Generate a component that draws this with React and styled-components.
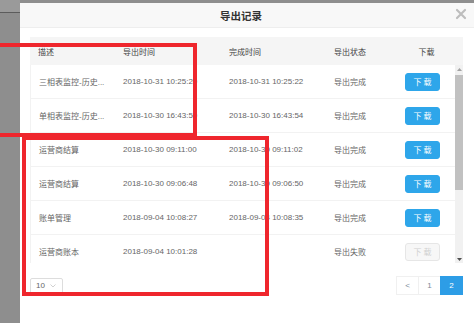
import React from 'react';
import styled, { createGlobalStyle } from 'styled-components';

const GlobalStyle = createGlobalStyle`
  html, body {
    margin: 0;
    padding: 0;
    background: #8e8e8e;
    overflow: hidden;
  }
  body {
    font-family: "Liberation Sans", "Noto Sans CJK SC", sans-serif;
  }
`;

const Page = styled.div`
  position: relative;
  display: flex;
  width: 474px;
  height: 323px;
  overflow: hidden;
  background: #8e8e8e;
`;

const Backdrop = styled.div`
  width: 20px;
  flex-shrink: 0;
`;

const BackdropBar = styled.div`
  height: 12px;
  background: #9a9a9a;
  border-bottom: 1px solid #5c5c5c;
`;

const Modal = styled.div`
  flex: 1;
  margin-top: 3px;
  background: #fff;
  display: flex;
  flex-direction: column;
`;

const ModalHeader = styled.div`
  position: relative;
  height: 24px;
  display: flex;
  align-items: center;
  justify-content: center;
  padding-right: 12px;
  background: #f8f8f8;
  border-bottom: 1px solid #eeeeee;
`;

const Title = styled.h3`
  margin: 0;
  font-size: 10.5px;
  font-weight: bold;
  color: #333;
`;

const Close = styled.span`
  position: absolute;
  right: 7px;
  top: 5px;
  display: flex;
`;

const ModalBody = styled.div`
  padding: 9px 11px 0 10px;
  display: flex;
  flex-direction: column;
`;

const Table = styled.div`
  display: flex;
  flex-direction: column;
`;

const HeadRow = styled.div`
  display: grid;
  grid-template-columns: 85px 106px 105px 64px 73px;
  height: 28px;
  align-items: center;
  background: #f5f5f5;
  font-size: 8px;
  color: #444;
`;

const Cell = styled.div`
  padding-left: ${p => (p.center ? '0' : '8px')};
  text-align: ${p => (p.center ? 'center' : 'left')};
  white-space: nowrap;
  overflow: hidden;
`;

const BodyWrap = styled.div`
  display: flex;
  height: 198px;
`;

const Rows = styled.div`
  width: 425px;
  overflow: hidden;
  border-left: 1px solid #f2f2f2;
  box-sizing: border-box;
`;

const Row = styled.div`
  display: grid;
  grid-template-columns: 84px 106px 105px 64px 65px;
  height: 34px;
  align-items: center;
  border-bottom: 1px solid #f2f2f2;
  box-sizing: border-box;
  font-size: 8px;
  color: #666;
`;

const DownloadButton = styled.button`
  justify-self: center;
  width: 35px;
  height: 18px;
  padding: 0;
  border-radius: 3px;
  font-family: inherit;
  font-size: 8px;
  letter-spacing: 2px;
  text-indent: 2px;
  border: 1px solid ${p => (p.disabled ? '#e6e6e6' : '#2ea6ea')};
  background: ${p => (p.disabled ? '#f7f7f7' : '#2ea6ea')};
  color: ${p => (p.disabled ? '#d0d0d0' : '#fff')};
`;

const Scrollbar = styled.div`
  width: 8px;
  background: #f1f1f1;
  display: flex;
  flex-direction: column;
  align-items: center;
`;

const ScrollArrow = styled.div`
  height: 8px;
  display: flex;
  align-items: center;
  justify-content: center;
`;

const ScrollThumb = styled.div`
  width: 8px;
  height: 115px;
  margin-top: 2px;
  background: #c1c1c1;
`;

const ScrollSpace = styled.div`
  flex: 1;
`;

const Footer = styled.div`
  display: flex;
  justify-content: space-between;
  align-items: center;
  margin-top: 13px;
`;

const PageSize = styled.div`
  width: 33px;
  height: 16px;
  box-sizing: border-box;
  border: 1px solid #dddddd;
  border-radius: 2px;
  display: flex;
  align-items: center;
  justify-content: space-between;
  padding: 0 6px 0 5px;
  font-size: 8px;
  color: #666;
`;

const Pager = styled.div`
  display: flex;
`;

const PageItem = styled.div`
  width: 23px;
  height: 19px;
  box-sizing: border-box;
  display: flex;
  align-items: center;
  justify-content: center;
  font-size: 8px;
  border: 1px solid ${p => (p.active ? '#2d9de6' : '#f0f0f0')};
  margin-left: -1px;
  background: ${p => (p.active ? '#2d9de6' : '#fff')};
  color: ${p => (p.active ? '#fff' : '#7a8a99')};
`;

const Mark = styled.div`
  position: absolute;
  border: 4px solid #ef262d;
  box-sizing: border-box;
  pointer-events: none;
`;

const records = [
  { desc: '三相表监控-历史...', start: '2018-10-31 10:25:20', end: '2018-10-31 10:25:22', status: '导出完成', ok: true },
  { desc: '单相表监控-历史...', start: '2018-10-30 16:43:50', end: '2018-10-30 16:43:54', status: '导出完成', ok: true },
  { desc: '运营商结算', start: '2018-10-30 09:11:00', end: '2018-10-30 09:11:02', status: '导出完成', ok: true },
  { desc: '运营商结算', start: '2018-10-30 09:06:48', end: '2018-10-30 09:06:50', status: '导出完成', ok: true },
  { desc: '账单管理', start: '2018-09-04 10:08:27', end: '2018-09-04 10:08:35', status: '导出完成', ok: true },
  { desc: '运营商账本', start: '2018-09-04 10:01:28', end: '', status: '导出失败', ok: false }
];

const CloseIcon = () => (
  <svg width="12" height="12" viewBox="0 0 12 12">
    <path d="M2 2 L10 10 M10 2 L2 10" stroke="#bdbdbd" strokeWidth="2.2" strokeLinecap="round" />
  </svg>
);

const Arrow = ({ down }) => (
  <svg width="5" height="3" viewBox="0 0 5 3">
    <path d={down ? 'M0 0 L5 0 L2.5 3 Z' : 'M0 3 L5 3 L2.5 0 Z'} fill={down ? '#505050' : '#a3a3a3'} />
  </svg>
);

const Chevron = () => (
  <svg width="6" height="4" viewBox="0 0 6 4">
    <path d="M0.5 0.5 L3 3 L5.5 0.5" fill="none" stroke="#c5c5c5" strokeWidth="0.8" />
  </svg>
);

const App = () => (
  <>
    <GlobalStyle />
    <Page>
      <Backdrop>
        <BackdropBar />
      </Backdrop>
      <Modal>
        <ModalHeader>
          <Title>导出记录</Title>
          <Close><CloseIcon /></Close>
        </ModalHeader>
        <ModalBody>
          <Table>
            <HeadRow>
              <Cell>描述</Cell>
              <Cell>导出时间</Cell>
              <Cell>完成时间</Cell>
              <Cell>导出状态</Cell>
              <Cell center>下载</Cell>
            </HeadRow>
            <BodyWrap>
              <Rows>
                {records.map((r, i) => (
                  <Row key={i}>
                    <Cell>{r.desc}</Cell>
                    <Cell>{r.start}</Cell>
                    <Cell>{r.end}</Cell>
                    <Cell>{r.status}</Cell>
                    <DownloadButton disabled={!r.ok}>下载</DownloadButton>
                  </Row>
                ))}
              </Rows>
              <Scrollbar>
                <ScrollArrow><Arrow /></ScrollArrow>
                <ScrollThumb />
                <ScrollSpace />
                <ScrollArrow><Arrow down /></ScrollArrow>
              </Scrollbar>
            </BodyWrap>
          </Table>
          <Footer>
            <PageSize>
              <span>10</span>
              <Chevron />
            </PageSize>
            <Pager>
              <PageItem>&lt;</PageItem>
              <PageItem>1</PageItem>
              <PageItem active>2</PageItem>
            </Pager>
          </Footer>
        </ModalBody>
      </Modal>
      <Mark style={{ left: -10, top: 43, width: 207, height: 94 }} />
      <Mark style={{ left: 22, top: 136, width: 247, height: 160 }} />
    </Page>
  </>
);

export default App;
